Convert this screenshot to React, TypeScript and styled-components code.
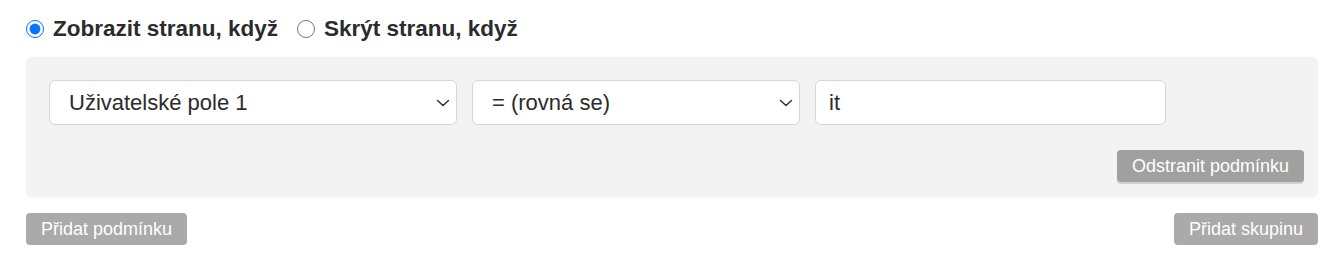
import React, { useState } from 'react';
import styled, { createGlobalStyle } from 'styled-components';

const GlobalStyle = createGlobalStyle`
	body {
		margin: 0;
		background: #ffffff;
		font-family: 'Liberation Sans', Arial, sans-serif;
		color: #333333;
	}
`;

const chevron =
	"url(\"data:image/svg+xml;utf8,<svg xmlns='http://www.w3.org/2000/svg' width='14' height='8' viewBox='0 0 14 8'><path d='M1.5 1.5l5.5 5 5.5-5' fill='none' stroke='%23333' stroke-width='1.5' stroke-linecap='round' stroke-linejoin='round'/></svg>\")";

const fields = ['Uživatelské pole 1', 'Uživatelské pole 2', 'Uživatelské pole 3'];
const operators = ['= (rovná se)', '!= (nerovná se)', 'obsahuje'];

const App = () => {
	const [mode, setMode] = useState<'show' | 'hide'>('show');
	const [field, setField] = useState(fields[0]);
	const [operator, setOperator] = useState(operators[0]);
	const [value, setValue] = useState('it');

	return (
		<Page>
			<GlobalStyle />
			<RadioRow>
				<RadioLabel>
					<Radio
						type="radio"
						name="mode"
						checked={mode === 'show'}
						onChange={() => setMode('show')}
					/>
					Zobrazit stranu, když
				</RadioLabel>
				<RadioLabel>
					<Radio
						type="radio"
						name="mode"
						checked={mode === 'hide'}
						onChange={() => setMode('hide')}
					/>
					Skrýt stranu, když
				</RadioLabel>
			</RadioRow>

			<Group>
				<ConditionRow>
					<Select $width={408} value={field} onChange={(e) => setField(e.target.value)}>
						{fields.map((f) => (
							<option key={f}>{f}</option>
						))}
					</Select>
					<Select $width={328} value={operator} onChange={(e) => setOperator(e.target.value)}>
						{operators.map((o) => (
							<option key={o}>{o}</option>
						))}
					</Select>
					<TextInput type="text" value={value} onChange={(e) => setValue(e.target.value)} />
				</ConditionRow>
				<GroupFooter>
					<GrayButton $shadow>Odstranit podmínku</GrayButton>
				</GroupFooter>
			</Group>

			<Actions>
				<GrayButton>Přidat podmínku</GrayButton>
				<GrayButton>Přidat skupinu</GrayButton>
			</Actions>
		</Page>
	);
};

export default App;

const Page = styled.div`
	padding: 15px 20px 0 26px;
	width: 1292px;
`;

const RadioRow = styled.div`
	display: flex;
	align-items: center;
	gap: 19px;
	height: 28px;
`;

const RadioLabel = styled.label`
	display: flex;
	align-items: center;
	gap: 9px;
	font-size: 22.5px;
	font-weight: bold;
	color: #2b2b2b;
	cursor: pointer;
`;

const Radio = styled.input`
	width: 18px;
	height: 18px;
	margin: 0;
	accent-color: #0075ff;
`;

const Group = styled.div`
	margin-top: 14px;
	background: #f3f3f3;
	border-radius: 6px;
	padding: 23px 14px 15px 23px;
`;

const ConditionRow = styled.div`
	display: flex;
	gap: 15px;
`;

const fieldBase = `
	box-sizing: border-box;
	height: 45px;
	border: 1px solid #d3d6da;
	border-radius: 6px;
	background-color: #ffffff;
	font-family: 'Liberation Sans', Arial, sans-serif;
	font-size: 22px;
	color: #2b2b2b;
	outline: none;
`;

const Select = styled.select<{ $width: number }>`
	${fieldBase}
	width: ${(p) => p.$width}px;
	padding: 0 30px 0 19px;
	appearance: none;
	background-image: ${chevron};
	background-repeat: no-repeat;
	background-position: right 6px center;
`;

const TextInput = styled.input`
	${fieldBase}
	width: 351px;
	padding: 0 13px;
`;

const GroupFooter = styled.div`
	display: flex;
	justify-content: flex-end;
	margin-top: 25px;
`;

const Actions = styled.div`
	display: flex;
	justify-content: space-between;
	margin-top: 16px;
`;

const GrayButton = styled.button<{ $shadow?: boolean }>`
	height: 32px;
	padding: 0 15px;
	border: none;
	border-radius: 4px;
	background: ${(p) => (p.$shadow ? '#a0a0a0' : '#aaaaaa')};
	box-shadow: ${(p) => (p.$shadow ? '0 2px 1px #cfcfcf' : 'none')};
	color: #ffffff;
	font-family: 'Liberation Sans', Arial, sans-serif;
	font-size: 18px;
	cursor: pointer;
`;
